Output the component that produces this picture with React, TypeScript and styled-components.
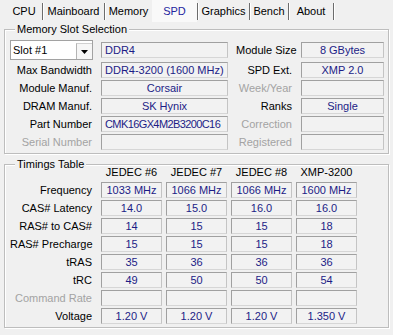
import React from 'react';
import styled, { createGlobalStyle } from 'styled-components';

const GlobalStyle = createGlobalStyle`
  html, body { margin: 0; padding: 0; background: #f0f0f0; }
  body { font-family: "Liberation Sans", Arial, sans-serif; font-size: 11px; color: #000; }
  * { box-sizing: border-box; }
`;

const Window = styled.div`
  width: 393px;
  height: 335px;
  background: #f0f0f0;
  overflow: hidden;
  display: flex;
  flex-direction: column;
`;

const TabBar = styled.div`
  display: flex;
  align-items: stretch;
  height: 22px;
  padding-left: 6px;
`;

const Tab = styled.div<{ $w: number; $active?: boolean }>`
  width: ${p => p.$w}px;
  text-align: center;
  line-height: 22px;
  white-space: nowrap;
  background: ${p => (p.$active ? '#f9f9f9' : 'transparent')};
  color: ${p => (p.$active ? '#2424a0' : '#000')};
`;

const TabSep = styled.div`
  width: 1px;
  height: 17px;
  align-self: center;
  background: #6c6c6c;
  box-shadow: 1px 0 0 #ffffff;
`;

const Body = styled.div`
  display: flex;
  flex-direction: column;
  padding: 7px 4px 0 4px;
  gap: 10px;
`;

const Group = styled.div`
  border: 1px solid #bdbdbd;
  box-shadow: inset 1px 1px 0 #ffffff, 1px 1px 0 #ffffff;
  display: flex;
  flex-direction: column;
  padding: 0 0 3px 5px;
`;

const GroupTitle = styled.div`
  width: fit-content;
  height: 14px;
  line-height: 14px;
  margin: -8px 0 0 5px;
  padding: 0 2px;
  background: #f0f0f0;
  white-space: nowrap;
`;

const SlotGrid = styled.div`
  display: grid;
  grid-template-columns: 83px 127px 57px 83px;
  grid-template-rows: 20px repeat(5, 16px);
  column-gap: 8px;
  row-gap: 2px;
  margin-top: 4px;
`;

const TimingGrid = styled.div`
  display: grid;
  grid-template-columns: 87px repeat(4, 61px);
  grid-template-rows: 15px repeat(8, 16px);
  column-gap: 4px;
  row-gap: 2px;
  margin-top: -6px;
`;

const Label = styled.div<{ $disabled?: boolean; $pad?: number }>`
  align-self: center;
  text-align: right;
  white-space: nowrap;
  line-height: 14px;
  padding-right: ${p => p.$pad ?? 1}px;
  color: ${p => (p.$disabled ? '#a3a3a3' : '#000')};
`;

const ColHead = styled.div`
  text-align: center;
  line-height: 15px;
  white-space: nowrap;
  color: #000;
`;

const Field = styled.div<{ $align?: 'left' | 'center'; $tight?: boolean }>`
  height: 16px;
  align-self: center;
  border: 1px solid;
  border-color: #a0a0a0 #c4c4c4 #d6d6d6 #a0a0a0;
  background: #f2f2f2;
  color: #1c1c86;
  line-height: 14px;
  padding: 0 3px;
  white-space: nowrap;
  overflow: hidden;
  text-align: ${p => p.$align ?? 'center'};
  letter-spacing: ${p => (p.$tight ? '-0.6px' : '0')};
`;

const Combo = styled.div`
  height: 20px;
  display: flex;
  align-items: stretch;
  background: #ffffff;
  border: 1px solid #a2a2a2;
`;

const ComboText = styled.span`
  flex: 1;
  padding-left: 2px;
  line-height: 18px;
  color: #000;
`;

const ComboButton = styled.span`
  width: 16px;
  margin-top: 2px;
  border-left: 1px solid #b4b4b4;
  border-top: 1px solid #d0d0d0;
  background: #f6f6f6;
  display: flex;
  align-items: center;
  justify-content: center;
`;

const Arrow = () => (
  <svg width="7" height="4" viewBox="0 0 7 4">
    <polygon points="0,0 7,0 3.5,4" fill="#000" />
  </svg>
);

type Row = { label: string; dis?: boolean; vals: string[] };

const timingRows: Row[] = [
  { label: 'Frequency', vals: ['1033 MHz', '1066 MHz', '1066 MHz', '1600 MHz'] },
  { label: 'CAS# Latency', vals: ['14.0', '15.0', '16.0', '16.0'] },
  { label: 'RAS# to CAS#', vals: ['14', '15', '15', '18'] },
  { label: 'RAS# Precharge', vals: ['15', '15', '15', '18'] },
  { label: 'tRAS', vals: ['35', '36', '36', '36'] },
  { label: 'tRC', vals: ['49', '50', '50', '54'] },
  { label: 'Command Rate', dis: true, vals: ['', '', '', ''] },
  { label: 'Voltage', vals: ['1.20 V', '1.20 V', '1.20 V', '1.350 V'] },
];

const tabs = [
  { name: 'CPU', w: 36, sep: true },
  { name: 'Mainboard', w: 61, sep: true },
  { name: 'Memory', w: 47, sep: false },
  { name: 'SPD', w: 45, sep: true, active: true },
  { name: 'Graphics', w: 51, sep: true },
  { name: 'Bench', w: 38, sep: true },
  { name: 'About', w: 44, sep: true },
];

export default function App() {
  return (
    <>
      <GlobalStyle />
      <Window>
        <TabBar>
          {tabs.map(t => (
            <React.Fragment key={t.name}>
              <Tab $w={t.w} $active={t.active}>{t.name}</Tab>
              {t.sep && <TabSep />}
            </React.Fragment>
          ))}
        </TabBar>
        <Body>
          <Group>
            <GroupTitle>Memory Slot Selection</GroupTitle>
            <SlotGrid>
              <Combo>
                <ComboText>Slot #1</ComboText>
                <ComboButton><Arrow /></ComboButton>
              </Combo>
              <Field $align="left">DDR4</Field>
              <Label>Module Size</Label>
              <Field>8 GBytes</Field>

              <Label>Max Bandwidth</Label>
              <Field $align="left">DDR4-3200 (1600 MHz)</Field>
              <Label>SPD Ext.</Label>
              <Field>XMP 2.0</Field>

              <Label>Module Manuf.</Label>
              <Field>Corsair</Field>
              <Label $disabled>Week/Year</Label>
              <Field />

              <Label>DRAM Manuf.</Label>
              <Field>SK Hynix</Field>
              <Label>Ranks</Label>
              <Field>Single</Field>

              <Label>Part Number</Label>
              <Field $align="left" $tight>CMK16GX4M2B3200C16</Field>
              <Label $disabled>Correction</Label>
              <Field />

              <Label $disabled>Serial Number</Label>
              <Field />
              <Label $disabled>Registered</Label>
              <Field />
            </SlotGrid>
          </Group>
          <Group>
            <GroupTitle>Timings Table</GroupTitle>
            <TimingGrid>
              <div />
              <ColHead>JEDEC #6</ColHead>
              <ColHead>JEDEC #7</ColHead>
              <ColHead>JEDEC #8</ColHead>
              <ColHead>XMP-3200</ColHead>
              {timingRows.map(r => (
                <React.Fragment key={r.label}>
                  <Label $disabled={r.dis} $pad={5}>{r.label}</Label>
                  {r.vals.map((v, i) => (
                    <Field key={i}>{v}</Field>
                  ))}
                </React.Fragment>
              ))}
            </TimingGrid>
          </Group>
        </Body>
      </Window>
    </>
  );
}
